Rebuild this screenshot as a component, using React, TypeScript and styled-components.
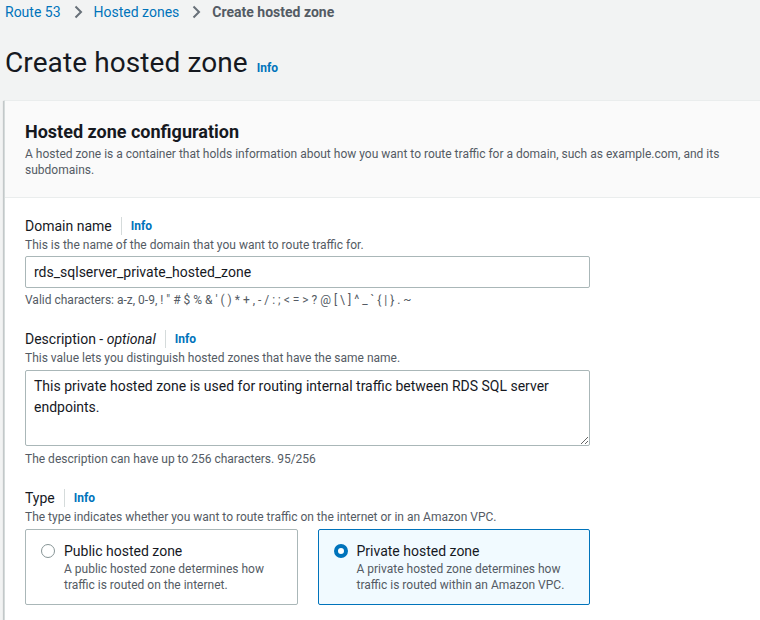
import React from "react";
import styled, { createGlobalStyle } from "styled-components";

const Global = createGlobalStyle`
  html, body { margin: 0; padding: 0; }
  body {
    background: #f2f3f3;
    font-family: Roboto, "Noto Sans", sans-serif;
    color: #16191f;
    overflow: hidden;
    width: 760px;
    height: 620px;
  }
`;

const Page = styled.div`
  padding: 0 0 0 5px;
  display: flex;
  flex-direction: column;
`;

const Crumbs = styled.nav`
  display: flex;
  align-items: center;
  height: 24px;
  font-size: 14px;
`;

const CrumbLink = styled.a`
  color: #0073bb;
  text-decoration: none;
`;

const CrumbCurrent = styled.span`
  color: #545b64;
  font-weight: 700;
`;

const Chevron = styled.svg`
  width: 16px;
  height: 16px;
  margin: 0 8px 0 9px;
  flex: none;
`;

const TitleRow = styled.div`
  display: flex;
  align-items: baseline;
  gap: 9px;
  margin-top: 21px;
  height: 38px;
`;

const Title = styled.h1`
  margin: 0;
  font-size: 28px;
  font-weight: 400;
  line-height: 36px;
  color: #16191f;
  letter-spacing: 0.1px;
`;

const InfoLink = styled.a`
  color: #0073bb;
  font-size: 12px;
  font-weight: 700;
  text-decoration: none;
`;

const Container = styled.section`
  margin-top: 17px;
  margin-left: -1px;
  width: 790px;
  background: #fff;
  border-left: 1px solid #d5dbdb;
  border-top: 1px solid #eaeded;
  box-shadow: 0 1px 1px 0 rgba(0, 28, 36, 0.3), 1px 1px 1px 0 rgba(0, 28, 36, 0.15),
    -1px 1px 1px 0 rgba(0, 28, 36, 0.15);
`;

const Header = styled.header`
  background: #fafafa;
  border-bottom: 1px solid #eaeded;
  padding: 19px 20px 19px 20px;
`;

const HeaderTitle = styled.h2`
  margin: 0;
  font-size: 18px;
  line-height: 24px;
  font-weight: 700;
  color: #16191f;
`;

const HeaderDesc = styled.p`
  margin: 2px 0 0 0;
  font-size: 12px;
  line-height: 16px;
  color: #545b64;
  max-width: 715px;
`;

const Body = styled.div`
  padding: 17px 20px 20px 20px;
  display: flex;
  flex-direction: column;
  gap: 20px;
  max-width: 565px;
`;

const Field = styled.div`
  display: flex;
  flex-direction: column;
`;

const LabelRow = styled.div`
  display: flex;
  align-items: center;
  height: 22px;
`;

const Label = styled.label`
  font-size: 14px;
  line-height: 22px;
  color: #16191f;
`;

const Sep = styled.span`
  width: 1px;
  height: 18px;
  background: #d5dbdb;
  margin: 0 9px 0 9px;
`;

const Help = styled.div`
  font-size: 12px;
  line-height: 16px;
  color: #545b64;
`;

const Input = styled.input`
  box-sizing: border-box;
  margin-top: 3px;
  width: 565px;
  height: 32px;
  border: 1px solid #aab7b8;
  border-radius: 2px;
  padding: 0 8px;
  font-family: inherit;
  font-size: 14px;
  color: #16191f;
  outline: none;
`;

const Constraint = styled.div<{ $gap?: number }>`
  margin-top: ${(p) => p.$gap ?? 4}px;
  font-size: 12px;
  line-height: 16px;
  color: #545b64;
`;

const TextArea = styled.textarea`
  box-sizing: border-box;
  margin-top: 4px;
  width: 565px;
  height: 76px;
  border: 1px solid #aab7b8;
  border-radius: 2px;
  padding: 5px 8px 4px 8px;
  font-family: inherit;
  font-size: 14px;
  line-height: 21px;
  color: #16191f;
  outline: none;
  resize: vertical;
  display: block;
`;

const Tiles = styled.div`
  margin-top: 4px;
  display: grid;
  grid-template-columns: 1fr 1fr;
  gap: 20px;
`;

const Tile = styled.div<{ $selected?: boolean }>`
  box-sizing: border-box;
  height: 76px;
  border: 1px solid ${(p) => (p.$selected ? "#0073bb" : "#aab7b8")};
  background: ${(p) => (p.$selected ? "#f1faff" : "#fff")};
  border-radius: 2px;
  padding: 11px 15px;
  display: flex;
  gap: 9px;
`;

const Radio = styled.span<{ $checked?: boolean }>`
  box-sizing: border-box;
  flex: none;
  width: 14px;
  height: 14px;
  margin-top: 3px;
  border-radius: 50%;
  border: ${(p) => (p.$checked ? "4px solid #0073bb" : "1px solid #879596")};
  background: #fff;
`;

const TileText = styled.div`
  display: flex;
  flex-direction: column;
`;

const TileTitle = styled.div`
  font-size: 14px;
  line-height: 20px;
  color: #16191f;
`;

const TileDesc = styled.div`
  font-size: 12px;
  line-height: 16px;
  color: #545b64;
`;

const ChevronIcon = () => (
  <Chevron viewBox="0 0 16 16">
    <path d="M5.5 2.5 L11 8 L5.5 13.5" fill="none" stroke="#687078" strokeWidth="2" />
  </Chevron>
);

export default function App() {
  return (
    <>
      <Global />
      <Page>
        <Crumbs>
          <CrumbLink>Route 53</CrumbLink>
          <ChevronIcon />
          <CrumbLink>Hosted zones</CrumbLink>
          <ChevronIcon />
          <CrumbCurrent>Create hosted zone</CrumbCurrent>
        </Crumbs>
        <TitleRow>
          <Title>Create hosted zone</Title>
          <InfoLink>Info</InfoLink>
        </TitleRow>
        <Container>
          <Header>
            <HeaderTitle>Hosted zone configuration</HeaderTitle>
            <HeaderDesc>
              A hosted zone is a container that holds information about how you want to route traffic for a
              domain, such as example.com, and its subdomains.
            </HeaderDesc>
          </Header>
          <Body>
            <Field>
              <LabelRow>
                <Label>Domain name</Label>
                <Sep />
                <InfoLink>Info</InfoLink>
              </LabelRow>
              <Help>This is the name of the domain that you want to route traffic for.</Help>
              <Input defaultValue="rds_sqlserver_private_hosted_zone" />
              <Constraint>
                {"Valid characters: a-z, 0-9, ! \" # $ % & ' ( ) * + , - / : ; < = > ? @ [ \\ ] ^ _ ` { | } . ~"}
              </Constraint>
            </Field>
            <Field>
              <LabelRow>
                <Label>
                  Description - <i>optional</i>
                </Label>
                <Sep />
                <InfoLink>Info</InfoLink>
              </LabelRow>
              <Help>This value lets you distinguish hosted zones that have the same name.</Help>
              <TextArea defaultValue="This private hosted zone is used for routing internal traffic between RDS SQL server endpoints." />
              <Constraint $gap={5}>The description can have up to 256 characters. 95/256</Constraint>
            </Field>
            <Field>
              <LabelRow>
                <Label>Type</Label>
                <Sep />
                <InfoLink>Info</InfoLink>
              </LabelRow>
              <Help>The type indicates whether you want to route traffic on the internet or in an Amazon VPC.</Help>
              <Tiles>
                <Tile>
                  <Radio />
                  <TileText>
                    <TileTitle>Public hosted zone</TileTitle>
                    <TileDesc>
                      A public hosted zone determines how
                      <br />
                      traffic is routed on the internet.
                    </TileDesc>
                  </TileText>
                </Tile>
                <Tile $selected>
                  <Radio $checked />
                  <TileText>
                    <TileTitle>Private hosted zone</TileTitle>
                    <TileDesc>
                      A private hosted zone determines how
                      <br />
                      traffic is routed within an Amazon VPC.
                    </TileDesc>
                  </TileText>
                </Tile>
              </Tiles>
            </Field>
          </Body>
        </Container>
      </Page>
    </>
  );
}
